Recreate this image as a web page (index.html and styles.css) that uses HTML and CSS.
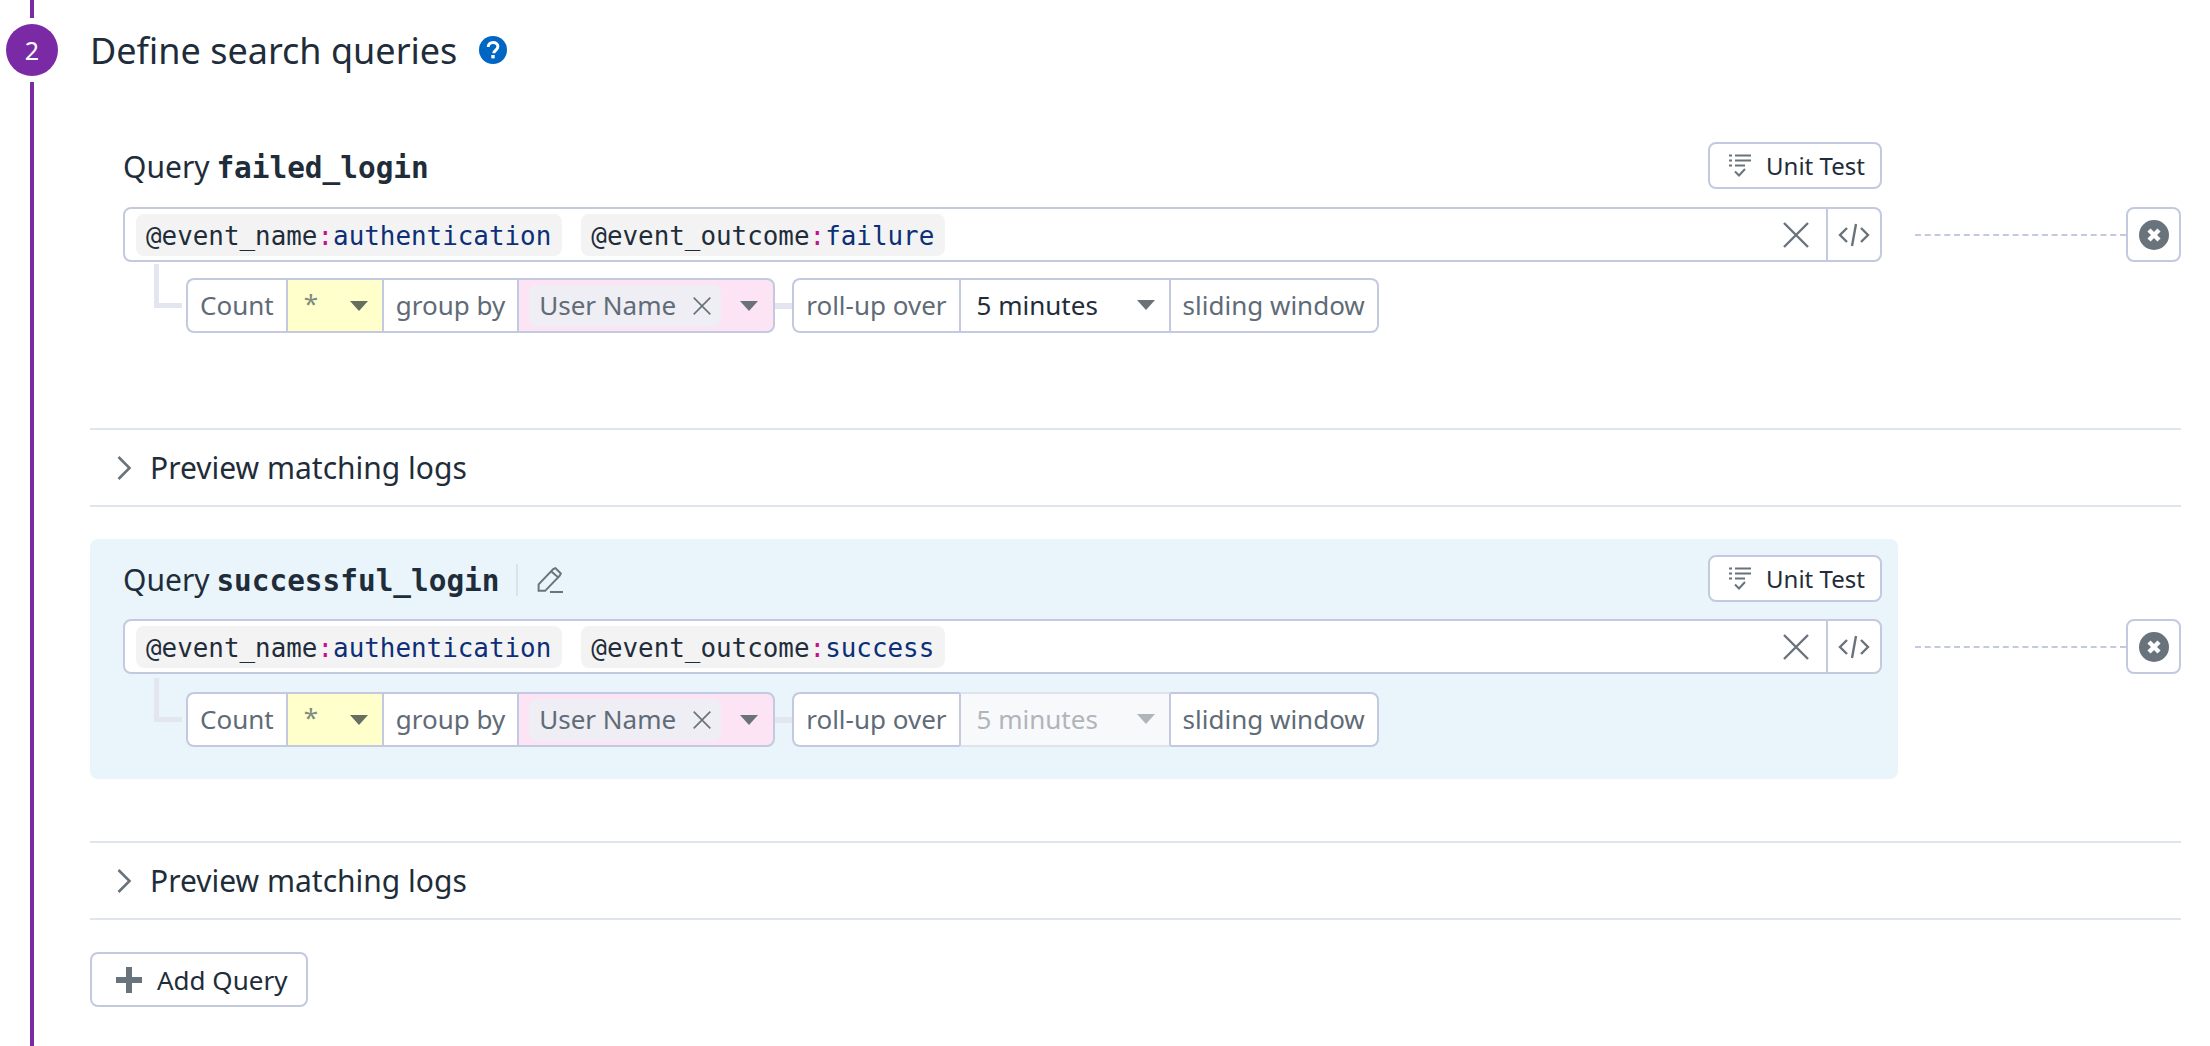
FILE: index.html
```html
<!DOCTYPE html>
<html lang="en">
  <head>
    <meta charset="UTF-8" />
    <meta name="viewport" content="width=device-width, initial-scale=1.0" />
    <title>Define search queries</title>
    <link rel="stylesheet" href="styles.css">
  </head>
  <body>
    <svg class="icon-defs" width="0" height="0">
      <defs>
        <symbol id="i-unit" viewBox="0 0 22 24">
          <path d="M0 1.5h3M6 1.5h16M0 6.5h3M6 6.5h16M0 11.5h3M6 11.5h10" fill="none" stroke="#69737c" stroke-width="2"/>
          <path d="M6 17.5l4 4 6-6.5" fill="none" stroke="#69737c" stroke-width="2"/>
        </symbol>
        <symbol id="i-close" viewBox="0 0 26 26">
          <path d="M1 1l24 24M25 1L1 25" fill="none" stroke="#69737c" stroke-width="2.4"/>
        </symbol>
        <symbol id="i-code" viewBox="0 0 32 24">
          <path d="M9 5L2 12l7 7M23 5l7 7-7 7M18 1l-4 22" fill="none" stroke="#69737c" stroke-width="2.4"/>
        </symbol>
        <symbol id="i-remove" viewBox="0 0 30 30">
          <circle cx="15" cy="15" r="15" fill="#69737c"/>
          <path d="M10 10l10 10M20 10L10 20" fill="none" stroke="#fff" stroke-width="4.4"/>
        </symbol>
        <symbol id="i-caret" viewBox="0 0 18 10">
          <path d="M0 0h18L9 10z" fill="currentColor"/>
        </symbol>
        <symbol id="i-chevron" viewBox="0 0 15 24">
          <path d="M1.5 1l11 11-11 11" fill="none" stroke="#69737c" stroke-width="2.6"/>
        </symbol>
      </defs>
    </svg>

    <div class="step">
      <div class="rail">
        <div class="rail-top"></div>
        <div class="step-num">2</div>
        <div class="rail-bottom"></div>
      </div>

      <div class="content">
        <div class="title-row">
          <h2>Define search queries</h2>
          <svg class="help" viewBox="0 0 28 28" width="28" height="28">
            <circle cx="14" cy="14" r="14" fill="#0066c4"/>
            <path d="M9.2 11c0-3 2.2-4.6 4.9-4.6s4.8 1.6 4.8 4.2c0 3.6-4.1 3.6-4.1 6.6" fill="none" stroke="#fff" stroke-width="3"/>
            <rect x="12.3" y="19" width="3.4" height="3.4" fill="#fff"/>
          </svg>
        </div>

        <div class="query">
          <div class="query-box">
            <div class="query-head">
              <div class="query-name">Query <b>failed_login</b></div>
              <button class="btn unit-btn"><svg width="22" height="24"><use href="#i-unit"/></svg>Unit Test</button>
            </div>
            <div class="search">
              <span class="chip">@event_name<i>:</i><em>authentication</em></span>
              <span class="chip">@event_outcome<i>:</i><em>failure</em></span>
              <svg class="search-clear" width="26" height="26"><use href="#i-close"/></svg>
              <span class="code-toggle"><svg width="32" height="24"><use href="#i-code"/></svg></span>
            </div>
            <div class="filters">
              <div class="elbow"></div>
              <div class="group">
                <span class="seg seg-text">Count</span>
                <span class="seg seg-select seg-star"><span class="star">*</span><svg class="caret" width="18" height="10"><use href="#i-caret"/></svg></span>
                <span class="seg seg-text">group by</span>
                <span class="seg seg-tags">
                  <span class="tag">User Name<svg width="18" height="18"><use href="#i-close"/></svg></span>
                  <svg class="caret" width="18" height="10"><use href="#i-caret"/></svg>
                </span>
              </div>
              <div class="link"></div>
              <div class="group">
                <span class="seg seg-text">roll-up over</span>
                <span class="seg seg-select seg-window">5 minutes<svg class="caret" width="18" height="10"><use href="#i-caret"/></svg></span>
                <span class="seg seg-text">sliding window</span>
              </div>
            </div>
          </div>
          <div class="query-side">
            <div class="dashes"></div>
            <span class="remove"><svg width="30" height="30"><use href="#i-remove"/></svg></span>
          </div>
        </div>

        <div class="preview">
          <svg width="15" height="24"><use href="#i-chevron"/></svg>
          <span>Preview matching logs</span>
        </div>

        <div class="query">
          <div class="query-box active">
            <div class="query-head">
              <div class="query-name">Query <b>successful_login</b>
                <span class="name-sep"></span>
                <svg class="pencil" viewBox="0 0 24 24" width="26" height="26">
                  <path d="M1.5 22v-6L15 2l2-1 5 5-1 2L7.5 22z" fill="none" stroke="#69737c" stroke-width="1.8"/>
                  <path d="M13 4l7 6M12 23h12" fill="none" stroke="#69737c" stroke-width="1.8"/>
                </svg>
              </div>
              <button class="btn unit-btn"><svg width="22" height="24"><use href="#i-unit"/></svg>Unit Test</button>
            </div>
            <div class="search">
              <span class="chip">@event_name<i>:</i><em>authentication</em></span>
              <span class="chip">@event_outcome<i>:</i><em>success</em></span>
              <svg class="search-clear" width="26" height="26"><use href="#i-close"/></svg>
              <span class="code-toggle"><svg width="32" height="24"><use href="#i-code"/></svg></span>
            </div>
            <div class="filters">
              <div class="elbow"></div>
              <div class="group">
                <span class="seg seg-text">Count</span>
                <span class="seg seg-select seg-star"><span class="star">*</span><svg class="caret" width="18" height="10"><use href="#i-caret"/></svg></span>
                <span class="seg seg-text">group by</span>
                <span class="seg seg-tags">
                  <span class="tag">User Name<svg width="18" height="18"><use href="#i-close"/></svg></span>
                  <svg class="caret" width="18" height="10"><use href="#i-caret"/></svg>
                </span>
              </div>
              <div class="link"></div>
              <div class="group">
                <span class="seg seg-text">roll-up over</span>
                <span class="seg seg-select seg-window disabled">5 minutes<svg class="caret" width="18" height="10"><use href="#i-caret"/></svg></span>
                <span class="seg seg-text">sliding window</span>
              </div>
            </div>
          </div>
          <div class="query-side">
            <div class="dashes"></div>
            <span class="remove"><svg width="30" height="30"><use href="#i-remove"/></svg></span>
          </div>
        </div>

        <div class="preview">
          <svg width="15" height="24"><use href="#i-chevron"/></svg>
          <span>Preview matching logs</span>
        </div>

        <button class="btn add-btn">
          <svg viewBox="0 0 28 28" width="28" height="28"><path d="M14 1v26M1 14h26" fill="none" stroke="#69737c" stroke-width="6"/></svg>
          Add Query
        </button>
      </div>
    </div>
  </body>
</html>
```

FILE: styles.css
```css
* {
  box-sizing: border-box;
}
html,
body {
  height: 100%;
}
body {
  margin: 0;
  background-color: #ffffff;
  color: #1f2d3a;
  font-family: "Noto Sans", sans-serif;
  font-size: 26px;
  overflow: hidden;
}
.icon-defs {
  position: absolute;
}
.step {
  display: flex;
  height: 1046px;
  padding-left: 6px;
}

/* left timeline */
.rail {
  display: flex;
  flex-direction: column;
  align-items: center;
  width: 52px;
  flex-shrink: 0;
}
.rail-top {
  width: 4px;
  height: 18px;
  background-color: #7b2aa6;
}
.rail-bottom {
  width: 4px;
  flex: 1;
  background-color: #7b2aa6;
}
.step-num {
  display: flex;
  align-items: center;
  justify-content: center;
  width: 52px;
  height: 52px;
  margin: 6px 0;
  border-radius: 50%;
  background-color: #7b2aa6;
  color: #ffffff;
  font-size: 25px;
}

.content {
  width: 2091px;
  margin-left: 32px;
}
.title-row {
  display: flex;
  align-items: center;
  gap: 22px;
  height: 100px;
  margin-bottom: 27px;
}
.title-row h2 {
  margin: 0;
  font-size: 36px;
  font-weight: 400;
}

/* query block */
.query {
  display: flex;
}
.query-box {
  width: 1808px;
  padding: 15px 16px 33px 33px;
  border-radius: 8px;
}
.query-box.active {
  padding-bottom: 32px;
  background-color: #e9f4fb;
}
.query-head {
  display: flex;
  align-items: center;
  justify-content: space-between;
  height: 47px;
  margin-bottom: 18px;
}
.active .query-head {
  margin-top: 1px;
  margin-bottom: 17px;
}
.query-name {
  display: flex;
  align-items: center;
  padding-top: 2px;
  font-size: 30px;
  white-space: pre;
}
.query-name b {
  margin-top: 2px;
  margin-left: -1px;
  font-family: "DejaVu Sans Mono", monospace;
  font-size: 29.4px;
}
.name-sep {
  width: 2px;
  height: 32px;
  margin: 0 18px 0 16px;
  background-color: #dde2ea;
}
.pencil {
  margin-left: 1px;
}
.btn {
  display: flex;
  align-items: center;
  background-color: #ffffff;
  border: 2px solid #c3cae0;
  border-radius: 8px;
  color: #1f2d3a;
  font-family: inherit;
  font-size: 26px;
}
.unit-btn {
  gap: 15px;
  width: 174px;
  height: 47px;
  padding: 0 0 0 19px;
  font-size: 24px;
}
.search {
  display: flex;
  align-items: center;
  height: 55px;
  padding-left: 11px;
  background-color: #ffffff;
  border: 2px solid #c3cae0;
  border-radius: 8px;
}
.chip {
  display: flex;
  align-items: center;
  height: 42px;
  margin-right: 19px;
  padding: 2px 11px 0 10px;
  background-color: #f3f3f4;
  border-radius: 8px;
  font-family: "DejaVu Sans Mono", monospace;
  font-size: 25.9px;
}
.chip i {
  color: #c8108f;
  font-style: normal;
}
.chip em {
  color: #0c2f77;
  font-style: normal;
}
.search-clear {
  margin-left: auto;
  margin-right: 17px;
}
.code-toggle {
  display: flex;
  align-items: center;
  justify-content: center;
  width: 54px;
  height: 100%;
  border-left: 2px solid #c3cae0;
}

/* aggregation row */
.filters {
  display: flex;
  margin-top: 2px;
}
.active .filters {
  margin-top: 4px;
}
.elbow {
  width: 28px;
  height: 44px;
  margin: 0 4px 0 31px;
  border-left: 5px solid #e3e6f0;
  border-bottom: 5px solid #e3e6f0;
}
.group {
  display: flex;
  height: 55px;
  margin-top: 14px;
}
.link {
  align-self: center;
  width: 17px;
  height: 6px;
  margin-top: 14px;
  background-color: #e3e6f0;
}
.seg {
  display: flex;
  align-items: center;
  padding-bottom: 2px;
  background-color: #ffffff;
  border-top: 2px solid #c3cae0;
  border-bottom: 2px solid #c3cae0;
  font-size: 26px;
  color: #5f6b76;
}
.seg:first-child {
  border-left: 2px solid #c3cae0;
  border-radius: 8px 0 0 8px;
}
.seg:last-child {
  border-right: 2px solid #c3cae0;
  border-radius: 0 8px 8px 0;
}
.seg-text {
  padding-left: 12px;
  padding-right: 12px;
  white-space: nowrap;
}
.seg-select {
  border-left: 2px solid #c3cae0;
  border-right: 2px solid #c3cae0;
}
.caret {
  color: #6b7178;
}
.seg-star {
  justify-content: space-between;
  width: 98px;
  padding: 0 14px 0 16px;
  background-color: #ffffcc;
  color: #7f8a80;
}
.seg-star .caret {
  color: #666e5f;
}
.star {
  margin-top: -6px;
}
.seg-tags {
  gap: 19px;
  width: 258px;
  padding: 0 0 0 10px;
  background-color: #fce4f4;
  border-left: 2px solid #c3cae0;
}
.tag {
  display: flex;
  align-items: center;
  justify-content: space-between;
  width: 192px;
  height: 42px;
  padding: 0 10px 2px;
  background-color: #eeeef4;
  border-radius: 8px;
  white-space: nowrap;
}
.tag svg {
  margin-top: 2px;
}
.seg-window {
  justify-content: space-between;
  width: 212px;
  padding: 0 14px 2px 16px;
  color: #1f2d3a;
  white-space: nowrap;
}
.seg-window.disabled {
  background-color: #f8f9fb;
  color: #b0b5ba;
  border-top-color: #dfe3ef;
  border-bottom-color: #dfe3ef;
}
.seg-window.disabled .caret {
  color: #b0b5ba;
}

/* right side of each query */
.query-side {
  display: flex;
  align-items: center;
  flex: 1;
  height: 55px;
  margin-top: 80px;
  padding-left: 17px;
}
.dashes {
  flex: 1;
  border-top: 2px dashed #c3cae0;
}
.remove {
  display: flex;
  align-items: center;
  justify-content: center;
  width: 55px;
  height: 55px;
  border: 2px solid #c3cae0;
  border-radius: 8px;
}

.preview {
  display: flex;
  align-items: center;
  gap: 18px;
  height: 79px;
  margin: 62px 0 32px;
  padding-left: 27px;
  border-top: 2px solid #e0e4ef;
  border-bottom: 2px solid #e0e4ef;
  font-size: 30px;
}
.add-btn {
  gap: 14px;
  width: 218px;
  height: 55px;
  padding: 0 0 0 23px;
}
```
